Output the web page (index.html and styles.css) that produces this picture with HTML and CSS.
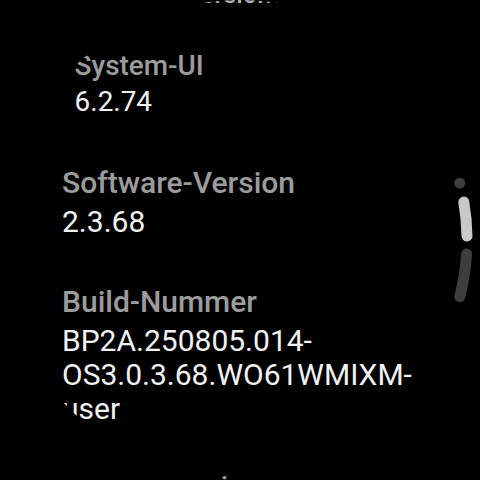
FILE: index.html
```html
<!DOCTYPE html>
<html>
<head>
  <title>Versionen</title>
  <link rel="stylesheet" href="styles.css">
</head>
<body>
  <div class="watch-screen">
    <div class="version-list">
      <h1 class="screen-title">Versionen</h1>

      <div class="version-item version-item-edge-top">
        <p class="version-label">System-UI</p>
        <p class="version-value">6.2.74</p>
      </div>

      <div class="version-item">
        <p class="version-label">Software-Version</p>
        <p class="version-value">2.3.68</p>
      </div>

      <div class="version-item">
        <p class="version-label">Build-Nummer</p>
        <p class="version-value">BP2A.250805.014-OS3.0.3.68.WO61WMIXM-user</p>
      </div>

      <div class="version-item version-item-edge-bottom">
        <p class="version-label">Kernel-Version</p>
        <p class="version-value">5.15.180</p>
      </div>
    </div>

    <svg class="scroll-indicator" width="480" height="480" viewBox="0 0 480 480">
      <circle cx="459.8" cy="183.2" r="5.5" fill="#3d3d3d"/>
      <path d="M463.8 202.1 A227 227 0 0 1 467 236" stroke="#c9c9c9" stroke-width="11" stroke-linecap="round" fill="none"/>
      <path d="M466.6 253.9 A227 227 0 0 1 459.8 296.8" stroke="#3d3d3d" stroke-width="11" stroke-linecap="round" fill="none"/>
    </svg>
  </div>
</body>
</html>
```

FILE: styles.css
```css
body {
  margin: 0;
  background-color: #000;
  font-family: 'Roboto', 'Noto Sans', sans-serif;
}

.watch-screen {
  position: relative;
  width: 480px;
  height: 480px;
  border-radius: 50%;
  overflow: hidden;
  background-color: #000;
}

.version-list {
  display: flex;
  flex-direction: column;
  margin-top: -22px;
  padding: 0 58px 0 62px;
}

.screen-title {
  margin: 0 0 32px 0;
  text-align: center;
  font-size: 30px;
  line-height: 36px;
  font-weight: 500;
  color: #b0b0b0;
  transform: translateY(-2px) scale(0.85);
}

.version-item + .version-item {
  margin-top: 45px;
}

.version-label {
  margin: 0;
  font-size: 30px;
  line-height: 36px;
  font-weight: 500;
  color: #9c9c9c;
}

.version-value {
  margin: 4px 0 0 0;
  font-size: 30px;
  line-height: 34px;
  font-weight: 400;
  color: #f2f2f2;
}

/* items near the round edge shrink toward the middle */
.version-item-edge-top {
  transform: scale(0.93);
}

.version-item-edge-bottom {
  transform-origin: top center;
  transform: scale(0.9);
}

.scroll-indicator {
  position: absolute;
  top: 0;
  left: 0;
}
```
